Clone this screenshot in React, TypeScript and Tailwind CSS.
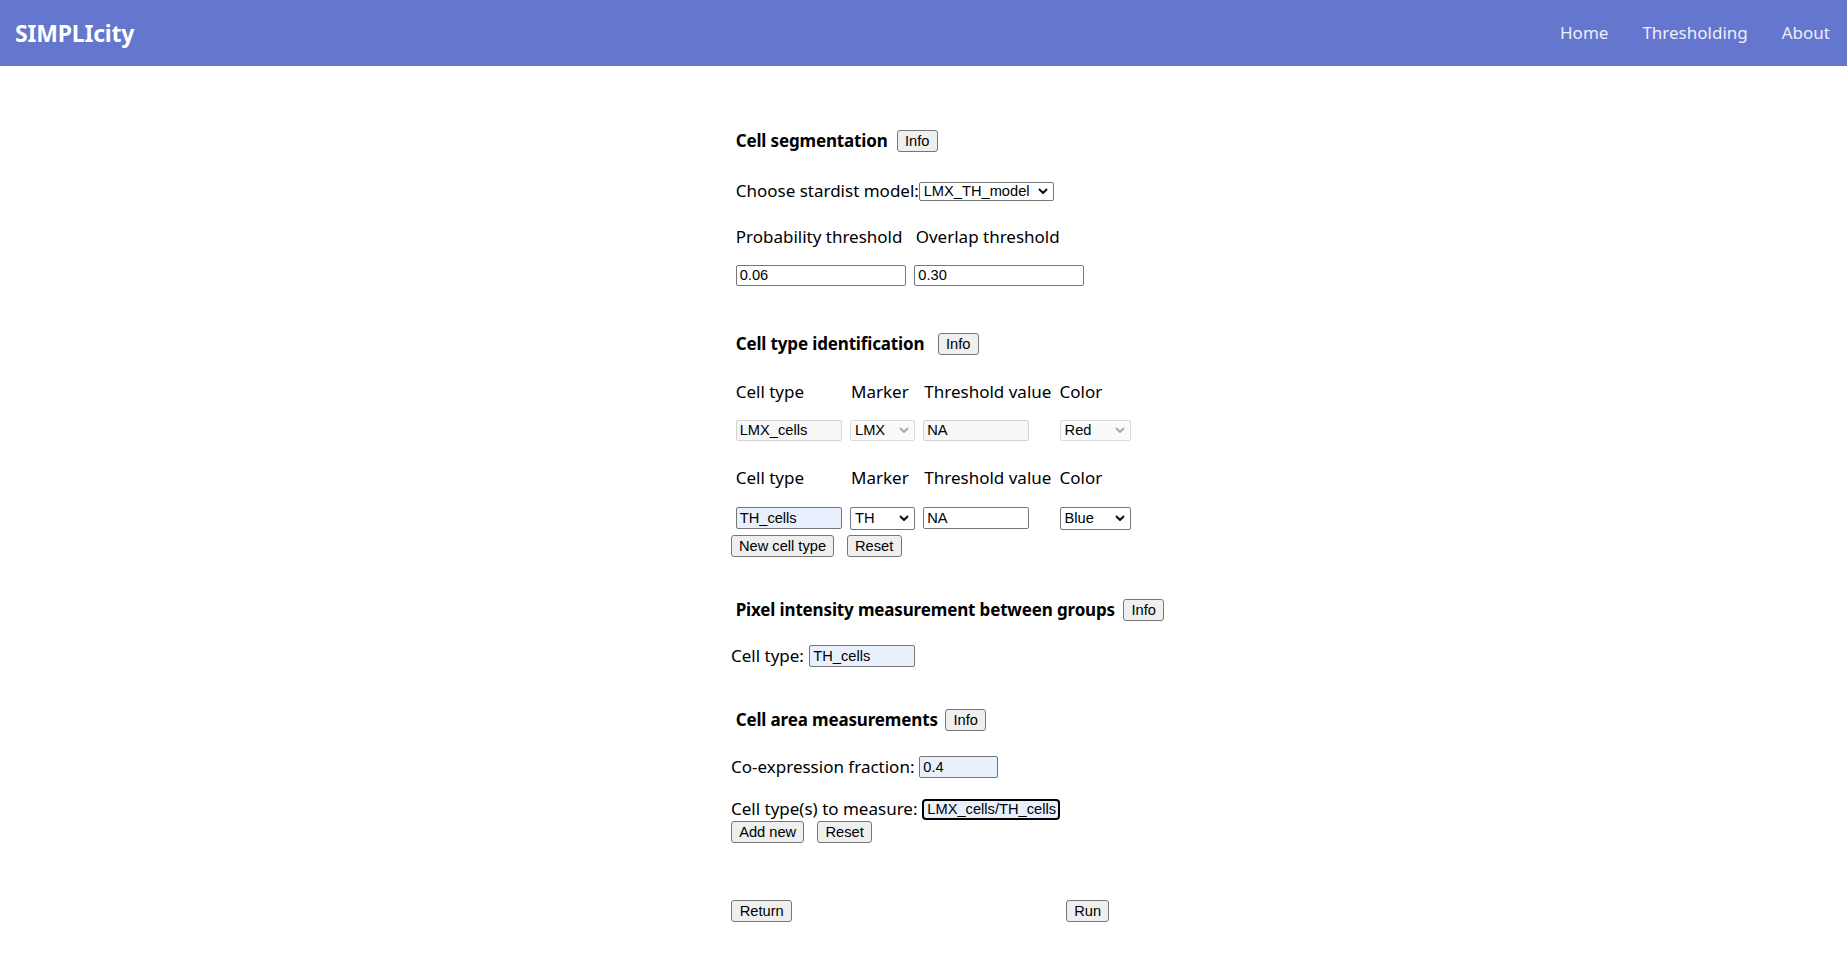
import React from "react";

const ctl = "font-['Liberation_Sans',Arial,sans-serif] text-[14.67px] text-black leading-none";

function Btn({ children, w }: { children: React.ReactNode; w: string }) {
  return (
    <button
      type="button"
      className={`${ctl} ${w} h-[22px] shrink-0 flex items-center justify-center bg-[#efefef] border border-[#767676] rounded-[3px]`}
    >
      {children}
    </button>
  );
}

function TextBox({
  value,
  w,
  h = "h-[21px]",
  variant = "normal",
}: {
  value: string;
  w: string;
  h?: string;
  variant?: "normal" | "readonly" | "autofill" | "focus";
}) {
  const v =
    variant === "readonly"
      ? "bg-[#f7f7f7] border border-[#d3d3d3] text-[#1a1a1a]"
      : variant === "autofill"
      ? "bg-[#e8f0fe] border border-[#767676]"
      : variant === "focus"
      ? "bg-[#e8f0fe] border-2 border-black rounded-[4px] pl-[2px]"
      : "bg-white border border-[#767676]";
  return (
    <div className={`${ctl} ${w} ${h} ${v} shrink-0 flex items-center pl-[3px] rounded-[2px] whitespace-nowrap overflow-hidden`}>
      {value}
    </div>
  );
}

function Chevron({ color }: { color: string }) {
  return (
    <svg width="10" height="7" viewBox="0 0 10 7" className="shrink-0">
      <path d="M1.5 1.5 L5 5 L8.5 1.5" fill="none" stroke={color} strokeWidth="1.8" strokeLinecap="round" strokeLinejoin="round" />
    </svg>
  );
}

function SelectBox({
  value,
  w,
  h = "h-[22px]",
  disabled = false,
}: {
  value: string;
  w: string;
  h?: string;
  disabled?: boolean;
}) {
  return (
    <div
      className={`${ctl} ${w} ${h} shrink-0 flex items-center justify-between pl-[4px] pr-[5px] rounded-[2px] whitespace-nowrap ${
        disabled ? "bg-[#fafafa] border border-[#dcdcdc] text-[#a8a8a8]" : "bg-white border border-[#767676]"
      }`}
    >
      <span>{value}</span>
      <Chevron color={disabled ? "#a8a8a8" : "#000"} />
    </div>
  );
}

function Heading({ text, w }: { text: string; w: string }) {
  return (
    <div className="h-[30px] flex items-center pl-[4.7px]">
      <span className={`${w} shrink-0 font-bold text-[17px] tracking-[-0.15px] text-black whitespace-nowrap`}>{text}</span>
      <Btn w="w-[41px]">Info</Btn>
    </div>
  );
}

function CellRow({
  name,
  marker,
  color,
  first,
}: {
  name: string;
  marker: string;
  color: string;
  first?: boolean;
}) {
  return (
    <>
      <div className="h-[30px] grid grid-cols-[106px_65px_128px_71px] gap-x-[8.3px] items-center pl-[4.7px] whitespace-nowrap">
        <span>Cell type</span>
        <span className="pl-[1px]">Marker</span>
        <span className="pl-[1px]">Threshold value</span>
        <span>Color</span>
      </div>
      <div
        className={`${first ? "mt-[11px]" : "mt-[13px]"} h-[24px] grid grid-cols-[106px_65px_128px_71px] gap-x-[8.3px] items-center pl-[4.7px]`}
      >
        {first ? (
          <>
            <TextBox value={name} w="w-[106px]" variant="readonly" />
            <SelectBox value={marker} w="w-[65px]" h="h-[21px]" disabled />
            <TextBox value="NA" w="w-[106px]" variant="readonly" />
            <SelectBox value={color} w="w-[71px]" h="h-[21px]" disabled />
          </>
        ) : (
          <>
            <TextBox value={name} w="w-[106px]" h="h-[22px]" variant="autofill" />
            <SelectBox value={marker} w="w-[65px]" h="h-[23px]" />
            <TextBox value="NA" w="w-[106px]" h="h-[22px]" />
            <SelectBox value={color} w="w-[71px]" h="h-[23px]" />
          </>
        )}
      </div>
    </>
  );
}

export default function App() {
  return (
    <div className="min-h-[980px] bg-white font-['Noto_Sans',sans-serif] text-[17px] text-black">
      <header className="h-[66px] bg-[#6576cf] flex items-center justify-between pl-[15px] pr-[17px]">
        <span className="text-white font-bold text-[23px] tracking-[-0.2px]">SIMPLIcity</span>
        <nav className="flex items-center gap-[34px] text-[17px] text-[#eceef9]">
          <span>Home</span>
          <span>Thresholding</span>
          <span>About</span>
        </nav>
      </header>

      <main className="mx-auto w-[385px] whitespace-nowrap">
        <div className="mt-[60px]">
          <Heading text="Cell segmentation" w="w-[161px]" />
        </div>

        <div className="mt-[20px] h-[30px] flex items-center pl-[4.7px]">
          <span className="w-[183px] shrink-0">Choose stardist model:</span>
          <SelectBox value="LMX_TH_model" w="w-[135px]" h="h-[19px]" />
        </div>

        <div className="mt-[16px] h-[30px] grid grid-cols-[170px_170px] gap-x-[9px] items-center pl-[4.7px]">
          <span>Probability threshold</span>
          <span className="pl-[1px]">Overlap threshold</span>
        </div>
        <div className="mt-[11px] h-[24px] grid grid-cols-[170px_170px] gap-x-[8.6px] items-center pl-[4.7px]">
          <TextBox value="0.06" w="w-[170px]" />
          <TextBox value="0.30" w="w-[170px]" />
        </div>

        <div className="mt-[42px]">
          <Heading text="Cell type identification" w="w-[202px]" />
        </div>

        <div className="mt-[18px]">
          <CellRow name="LMX_cells" marker="LMX" color="Red" first />
        </div>
        <div className="mt-[21px]">
          <CellRow name="TH_cells" marker="TH" color="Blue" />
        </div>

        <div className="mt-[5px] flex items-center gap-[12.6px]">
          <Btn w="w-[103px]">New cell type</Btn>
          <Btn w="w-[55px]">Reset</Btn>
        </div>

        <div className="mt-[38px]">
          <Heading text="Pixel intensity measurement between groups" w="w-[387.6px]" />
        </div>

        <div className="mt-[16px] h-[30px] flex items-center">
          <span className="w-[78.3px] shrink-0">Cell type:</span>
          <TextBox value="TH_cells" w="w-[106px]" h="h-[22px]" variant="autofill" />
        </div>

        <div className="mt-[34px]">
          <Heading text="Cell area measurements" w="w-[209.6px]" />
        </div>

        <div className="mt-[17px] h-[30px] flex items-center">
          <span className="w-[188.3px] shrink-0">Co-expression fraction:</span>
          <TextBox value="0.4" w="w-[79px]" h="h-[22px]" variant="autofill" />
        </div>

        <div className="mt-[16px] h-[22px] flex items-center">
          <span className="w-[191.3px] shrink-0">Cell type(s) to measure:</span>
          <TextBox value="LMX_cells/TH_cells" w="w-[138px]" h="h-[21px]" variant="focus" />
        </div>

        <div className="mt-[1px] flex items-center gap-[12.6px]">
          <Btn w="w-[73.4px]">Add new</Btn>
          <Btn w="w-[55.4px]">Reset</Btn>
        </div>

        <div className="mt-[57px] flex items-center">
          <Btn w="w-[61.4px]">Return</Btn>
          <div className="w-[274px] shrink-0" />
          <Btn w="w-[42.6px]">Run</Btn>
        </div>
      </main>
    </div>
  );
}
